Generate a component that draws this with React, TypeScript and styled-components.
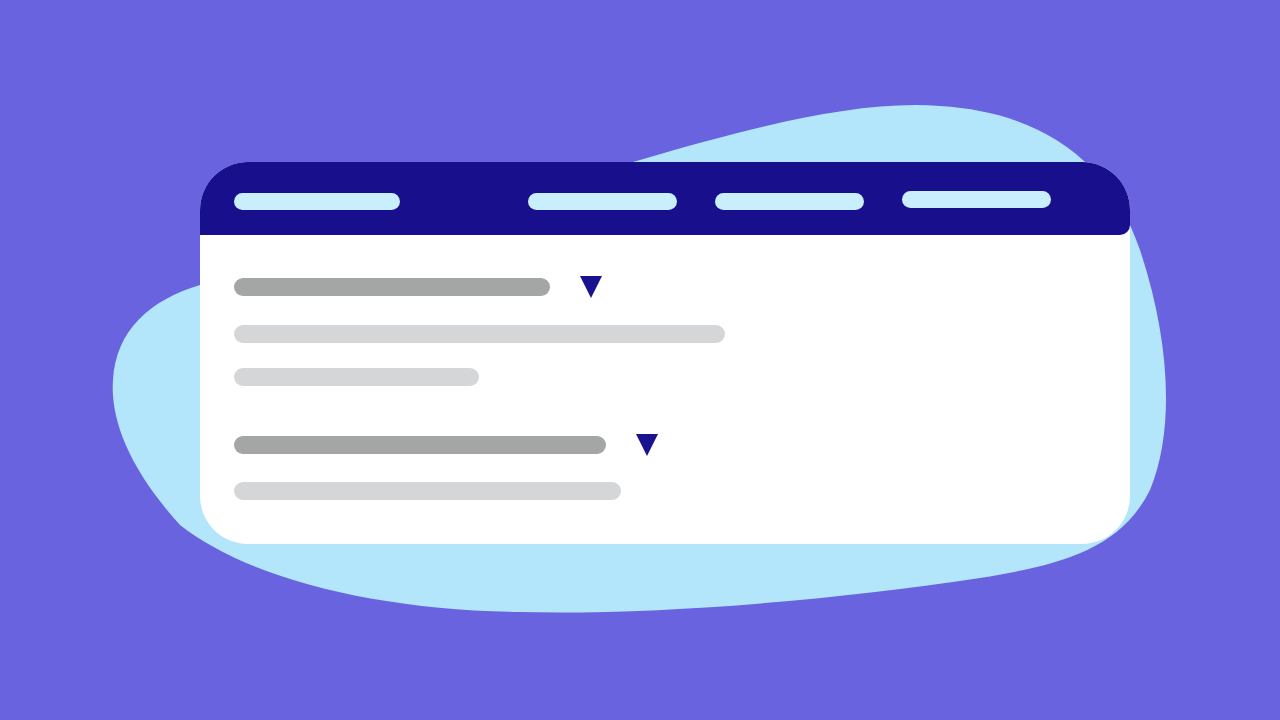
import React from 'react';
import styled, { createGlobalStyle } from 'styled-components';

const GlobalStyle = createGlobalStyle`
  html, body {
    margin: 0;
    padding: 0;
    background: #6a63df;
    font-family: "Liberation Sans", Arial, sans-serif;
  }
`;

const Page = styled.div`
  position: relative;
  width: 1280px;
  height: 720px;
  overflow: hidden;
  background: #6a63df;
  padding: 162px 0 0 200px;
  box-sizing: border-box;
`;

const Blob = styled.svg`
  position: absolute;
  left: 0;
  top: 0;
  width: 1280px;
  height: 720px;
`;

const Card = styled.div`
  position: relative;
  width: 930px;
  height: 382px;
  background: #ffffff;
  border-radius: 48px;
  overflow: hidden;
  display: flex;
  flex-direction: column;
`;

const Header = styled.div`
  height: 73px;
  background: #170f8c;
  border-bottom-right-radius: 10px;
  display: flex;
  align-items: flex-start;
  justify-content: space-between;
  padding: 31px 79px 0 34px;
  box-sizing: border-box;
`;

const NavGroup = styled.div`
  display: flex;
  gap: 38px;
`;

const Pill = styled.div<{ $w: number; $color: string; $lift?: number }>`
  width: ${(p) => p.$w}px;
  height: 17px;
  border-radius: 9px;
  background: ${(p) => p.$color};
  transform: translateY(${(p) => -(p.$lift ?? 0)}px);
`;

const Body = styled.div`
  padding: 43px 0 0 34px;
  display: flex;
  flex-direction: column;
`;

const Row = styled.div<{ $top: number }>`
  display: flex;
  align-items: center;
  gap: 30px;
  margin-top: ${(p) => p.$top}px;
  height: 18px;
`;

const Bar = styled.div<{ $w: number; $dark?: boolean }>`
  width: ${(p) => p.$w}px;
  height: 18px;
  border-radius: 9px;
  background: ${(p) => (p.$dark ? '#a4a5a5' : '#d5d6d8')};
`;

const Caret = styled.div`
  width: 0;
  height: 0;
  border-left: 11.5px solid transparent;
  border-right: 11.5px solid transparent;
  border-top: 22px solid #19138f;
`;

const App = () => {
  return (
    <>
      <GlobalStyle />
      <Page>
        <Blob viewBox="0 0 1280 720">
          <path
            fill="#b3e6fb"
            d="M 640 160 C 760 125, 860 100, 940 106 C 1040 112, 1110 160, 1140 250 C 1170 340, 1175 430, 1150 490 C 1120 550, 1060 565, 980 578 C 820 602, 650 615, 520 612 C 380 610, 250 580, 180 525 C 130 470, 110 420, 113 380 C 116 330, 150 300, 200 285 L 640 160 Z"
          />
        </Blob>
        <Card>
          <Header>
            <Pill $w={166} $color="#c9eefd" />
            <NavGroup>
              <Pill $w={149} $color="#c9eefd" />
              <Pill $w={149} $color="#c9eefd" />
              <Pill $w={149} $color="#c9eefd" $lift={2} />
            </NavGroup>
          </Header>
          <Body>
            <Row $top={0}>
              <Bar $w={316} $dark />
              <Caret />
            </Row>
            <Row $top={29}>
              <Bar $w={491} />
            </Row>
            <Row $top={25}>
              <Bar $w={245} />
            </Row>
            <Row $top={50}>
              <Bar $w={372} $dark />
              <Caret />
            </Row>
            <Row $top={28}>
              <Bar $w={387} />
            </Row>
          </Body>
        </Card>
      </Page>
    </>
  );
};

export default App;
